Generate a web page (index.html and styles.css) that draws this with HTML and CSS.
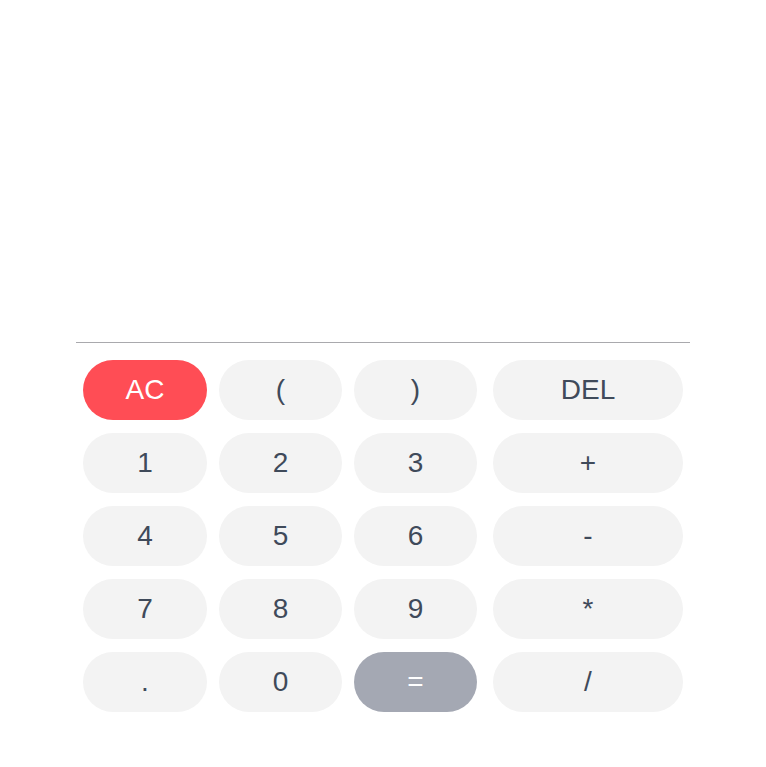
FILE: index.html
```html
<!DOCTYPE html>
<html lang="en">
<head>
<meta charset="utf-8">
<title>Calculator</title>
<link rel="stylesheet" href="styles.css">
</head>
<body>
<div class="calc">
  <div class="display"></div>
  <div class="keys">
    <button class="key key-clear">AC</button>
    <button class="key">(</button>
    <button class="key">)</button>
    <button class="key key-wide">DEL</button>
    <button class="key">1</button>
    <button class="key">2</button>
    <button class="key">3</button>
    <button class="key key-wide">+</button>
    <button class="key">4</button>
    <button class="key">5</button>
    <button class="key">6</button>
    <button class="key key-wide">-</button>
    <button class="key">7</button>
    <button class="key">8</button>
    <button class="key">9</button>
    <button class="key key-wide">*</button>
    <button class="key">.</button>
    <button class="key">0</button>
    <button class="key key-equals">=</button>
    <button class="key key-wide">/</button>
  </div>
</div>
</body>
</html>
```
FILE: styles.css
```css
html, body {
  margin: 0;
  padding: 0;
  background: #ffffff;
}

body {
  font-family: "Liberation Sans", Arial, sans-serif;
}

.calc {
  width: 614px;
  margin: 0 auto;
}

.display {
  height: 342px;
  border-bottom: 1px solid #a9a9ad;
}

.keys {
  display: grid;
  grid-template-columns: 124px 123px 123px 1fr;
  grid-auto-rows: 60px;
  column-gap: 12px;
  row-gap: 13px;
  padding: 17px 7px 0 7px;
}

.key {
  border: none;
  border-radius: 30px;
  background: #f3f3f3;
  color: #3f4a5a;
  font-family: "Liberation Sans", Arial, sans-serif;
  font-size: 28px;
  display: flex;
  align-items: center;
  justify-content: center;
  padding: 0;
  margin: 0;
}

.key-wide {
  width: 190px;
  justify-self: end;
}

.key-clear {
  background: #ff4d55;
  color: #ffffff;
}

.key-equals {
  background: #a4a8b3;
  color: #ffffff;
}
```
